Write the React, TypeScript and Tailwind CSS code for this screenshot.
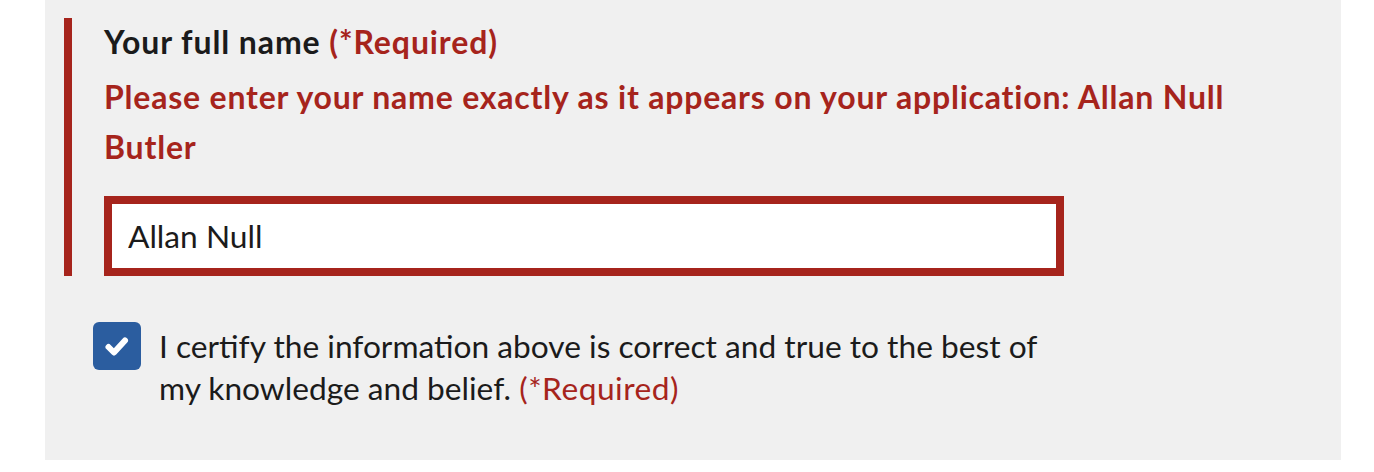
import React from "react";

const font = { fontFamily: "Lato, 'Noto Sans', sans-serif" };

export default function App() {
  return (
    <div className="w-full h-[472px] bg-white" style={font}>
      <div className="ml-[45px] w-[1296px] h-[460px] bg-[#f0f0f0] pt-[18px] pl-[19px] text-[#1b1b1b]">
        {/* error group */}
        <div className="border-l-8 border-[#a6241c] pl-[32px] pt-[4px]">
          <label htmlFor="full-name" className="block text-[32px] leading-[40px] font-bold tracking-[0.9px]">
            Your full name <span className="text-[#a6241c]">(*Required)</span>
          </label>
          <p className="mt-[10px] w-[1160px] text-[32px] leading-[50px] font-bold tracking-[0.8px] text-[#a6241c]">
            Please enter your name exactly as it appears on your application: Allan Null Butler
          </p>
          <input
            id="full-name"
            type="text"
            defaultValue="Allan Null"
            className="mt-[24px] block w-[960px] h-[80px] border-8 border-[#a6241c] bg-white px-[16px] text-[31.7px] text-[#1b1b1b] outline-none"
          />
        </div>

        {/* certify checkbox */}
        <div className="mt-[46px] ml-[29px] flex items-start gap-[18px]">
          <span className="flex h-[48px] w-[48px] shrink-0 items-center justify-center rounded-[6px] bg-[#2b5d9f]">
            <svg width="48" height="48" viewBox="0 0 48 48" fill="none">
              <path
                d="M15.5 25 L21 30.5 L32 18.5"
                stroke="white"
                strokeWidth="6"
                strokeLinecap="round"
                strokeLinejoin="round"
              />
            </svg>
          </span>
          <p className="pt-[3px] w-[960px] text-[31.7px] leading-[42px]">
            I certify the information above is correct and true to the best of
            <br />
            my knowledge and belief.{" "}
            <span className="text-[#a6241c] tracking-[0.5px]">(*Required)</span>
          </p>
        </div>
      </div>
    </div>
  );
}
